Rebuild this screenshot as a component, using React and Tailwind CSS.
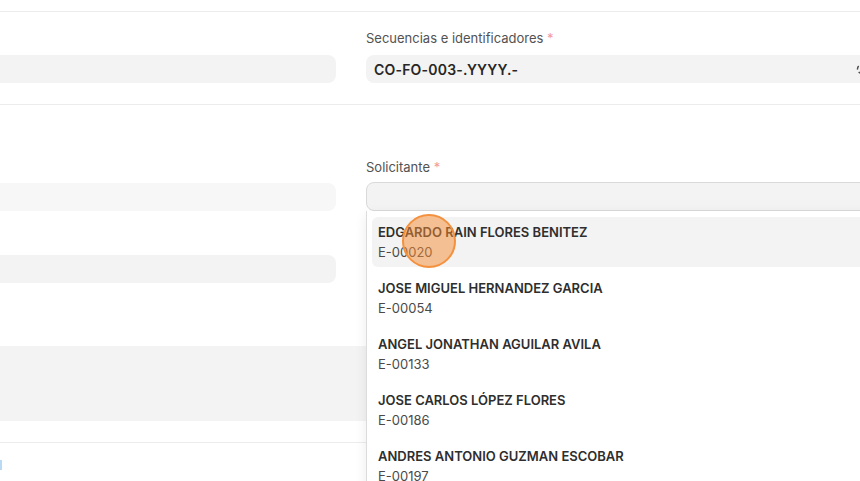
import React from "react";

const empleados = [
  { id: "E-00020", nombre: "EDGARDO RAIN FLORES BENITEZ" },
  { id: "E-00054", nombre: "JOSE MIGUEL HERNANDEZ GARCIA" },
  { id: "E-00133", nombre: "ANGEL JONATHAN AGUILAR AVILA" },
  { id: "E-00186", nombre: "JOSE CARLOS LÓPEZ FLORES" },
  { id: "E-00197", nombre: "ANDRES ANTONIO GUZMAN ESCOBAR" },
];

function Label({ children }) {
  return (
    <div className="h-5 text-[13px] leading-5 text-[#525252]">
      {children} <span className="text-[#f19a9a]">*</span>
    </div>
  );
}

function App() {
  return (
    <div
      className="relative w-[860px] h-[481px] overflow-hidden bg-white"
      style={{ fontFamily: "Inter, 'Noto Sans', sans-serif" }}
    >
      <div className="-ml-[40px] w-[960px]">
        <div className="h-[11px]" />

        {/* serie */}
        <div className="border-t border-[#ececec] pt-4 pb-[21px]">
          <div className="grid grid-cols-[376px_1fr] gap-x-[30px]">
            <div className="pt-[27px]">
              <div className="h-7 rounded-r-lg bg-[#f3f3f3]" />
            </div>
            <div className="flex flex-col gap-[7px]">
              <Label>Secuencias e identificadores</Label>
              <div className="h-7 rounded-lg bg-[#f3f3f3] flex items-center pl-2">
                <span className="text-[14px] font-semibold tracking-[0.2px] text-[#262626]">
                  CO-FO-003-.YYYY.-
                </span>
                <svg
                  viewBox="0 0 12 12"
                  className="ml-auto mr-[52px] w-3 h-3"
                  fill="none"
                  stroke="#4b4b4b"
                  strokeWidth="1.4"
                >
                  <circle cx="6" cy="6" r="4.5" strokeDasharray="4 2.5" />
                </svg>
              </div>
            </div>
          </div>
        </div>

        {/* solicitante */}
        <div className="border-t border-[#ececec] pt-[52px] pb-[21px]">
          <div className="grid grid-cols-[376px_1fr] gap-x-[30px]">
            <div className="pt-[26px] flex flex-col gap-[44px]">
              <div className="h-7 rounded-r-lg bg-[#f7f7f7]" />
              <div className="h-7 rounded-r-lg bg-[#f3f3f3]" />
            </div>
            <div className="flex flex-col gap-[5px]">
              <Label>Solicitante</Label>
              <div className="relative">
                <div className="h-[29px] rounded-lg bg-[#f3f3f3] border border-[#d9d9d9]" />
                <div className="absolute z-10 top-full left-0 right-0 bg-white border-l border-[#dcdcdc] shadow-[0_4px_12px_rgba(0,0,0,0.08)] pt-[6px] pl-[5px] pr-[6px] flex flex-col gap-[6px]">
                  {empleados.map((e, i) => (
                    <div
                      key={e.id}
                      className={`px-[6px] py-[5px] rounded-md ${
                        i === 0 ? "bg-[#f3f3f3]" : ""
                      }`}
                    >
                      <div className="text-[13px] leading-5 font-semibold text-[#2e2e2e]">
                        {e.nombre}
                      </div>
                      <div className="text-[13px] leading-5 text-[#4a4a4a]">
                        {e.id}
                      </div>
                    </div>
                  ))}
                </div>
              </div>
            </div>
          </div>

          <div className="mt-[63px] h-[75px] bg-[#f3f3f3]" />
        </div>

        <div className="border-t border-[#ececec] pt-[17px] pl-[40px]">
          <div className="w-[2px] h-[10px] bg-[#b8daf4]" />
        </div>
      </div>

      {/* cursor highlight */}
      <div className="absolute z-20 left-[402px] top-[214px] w-[54px] h-[54px] rounded-full bg-[#f58c32]/50 border-2 border-[#f4913f]" />
    </div>
  );
}

export default App;
